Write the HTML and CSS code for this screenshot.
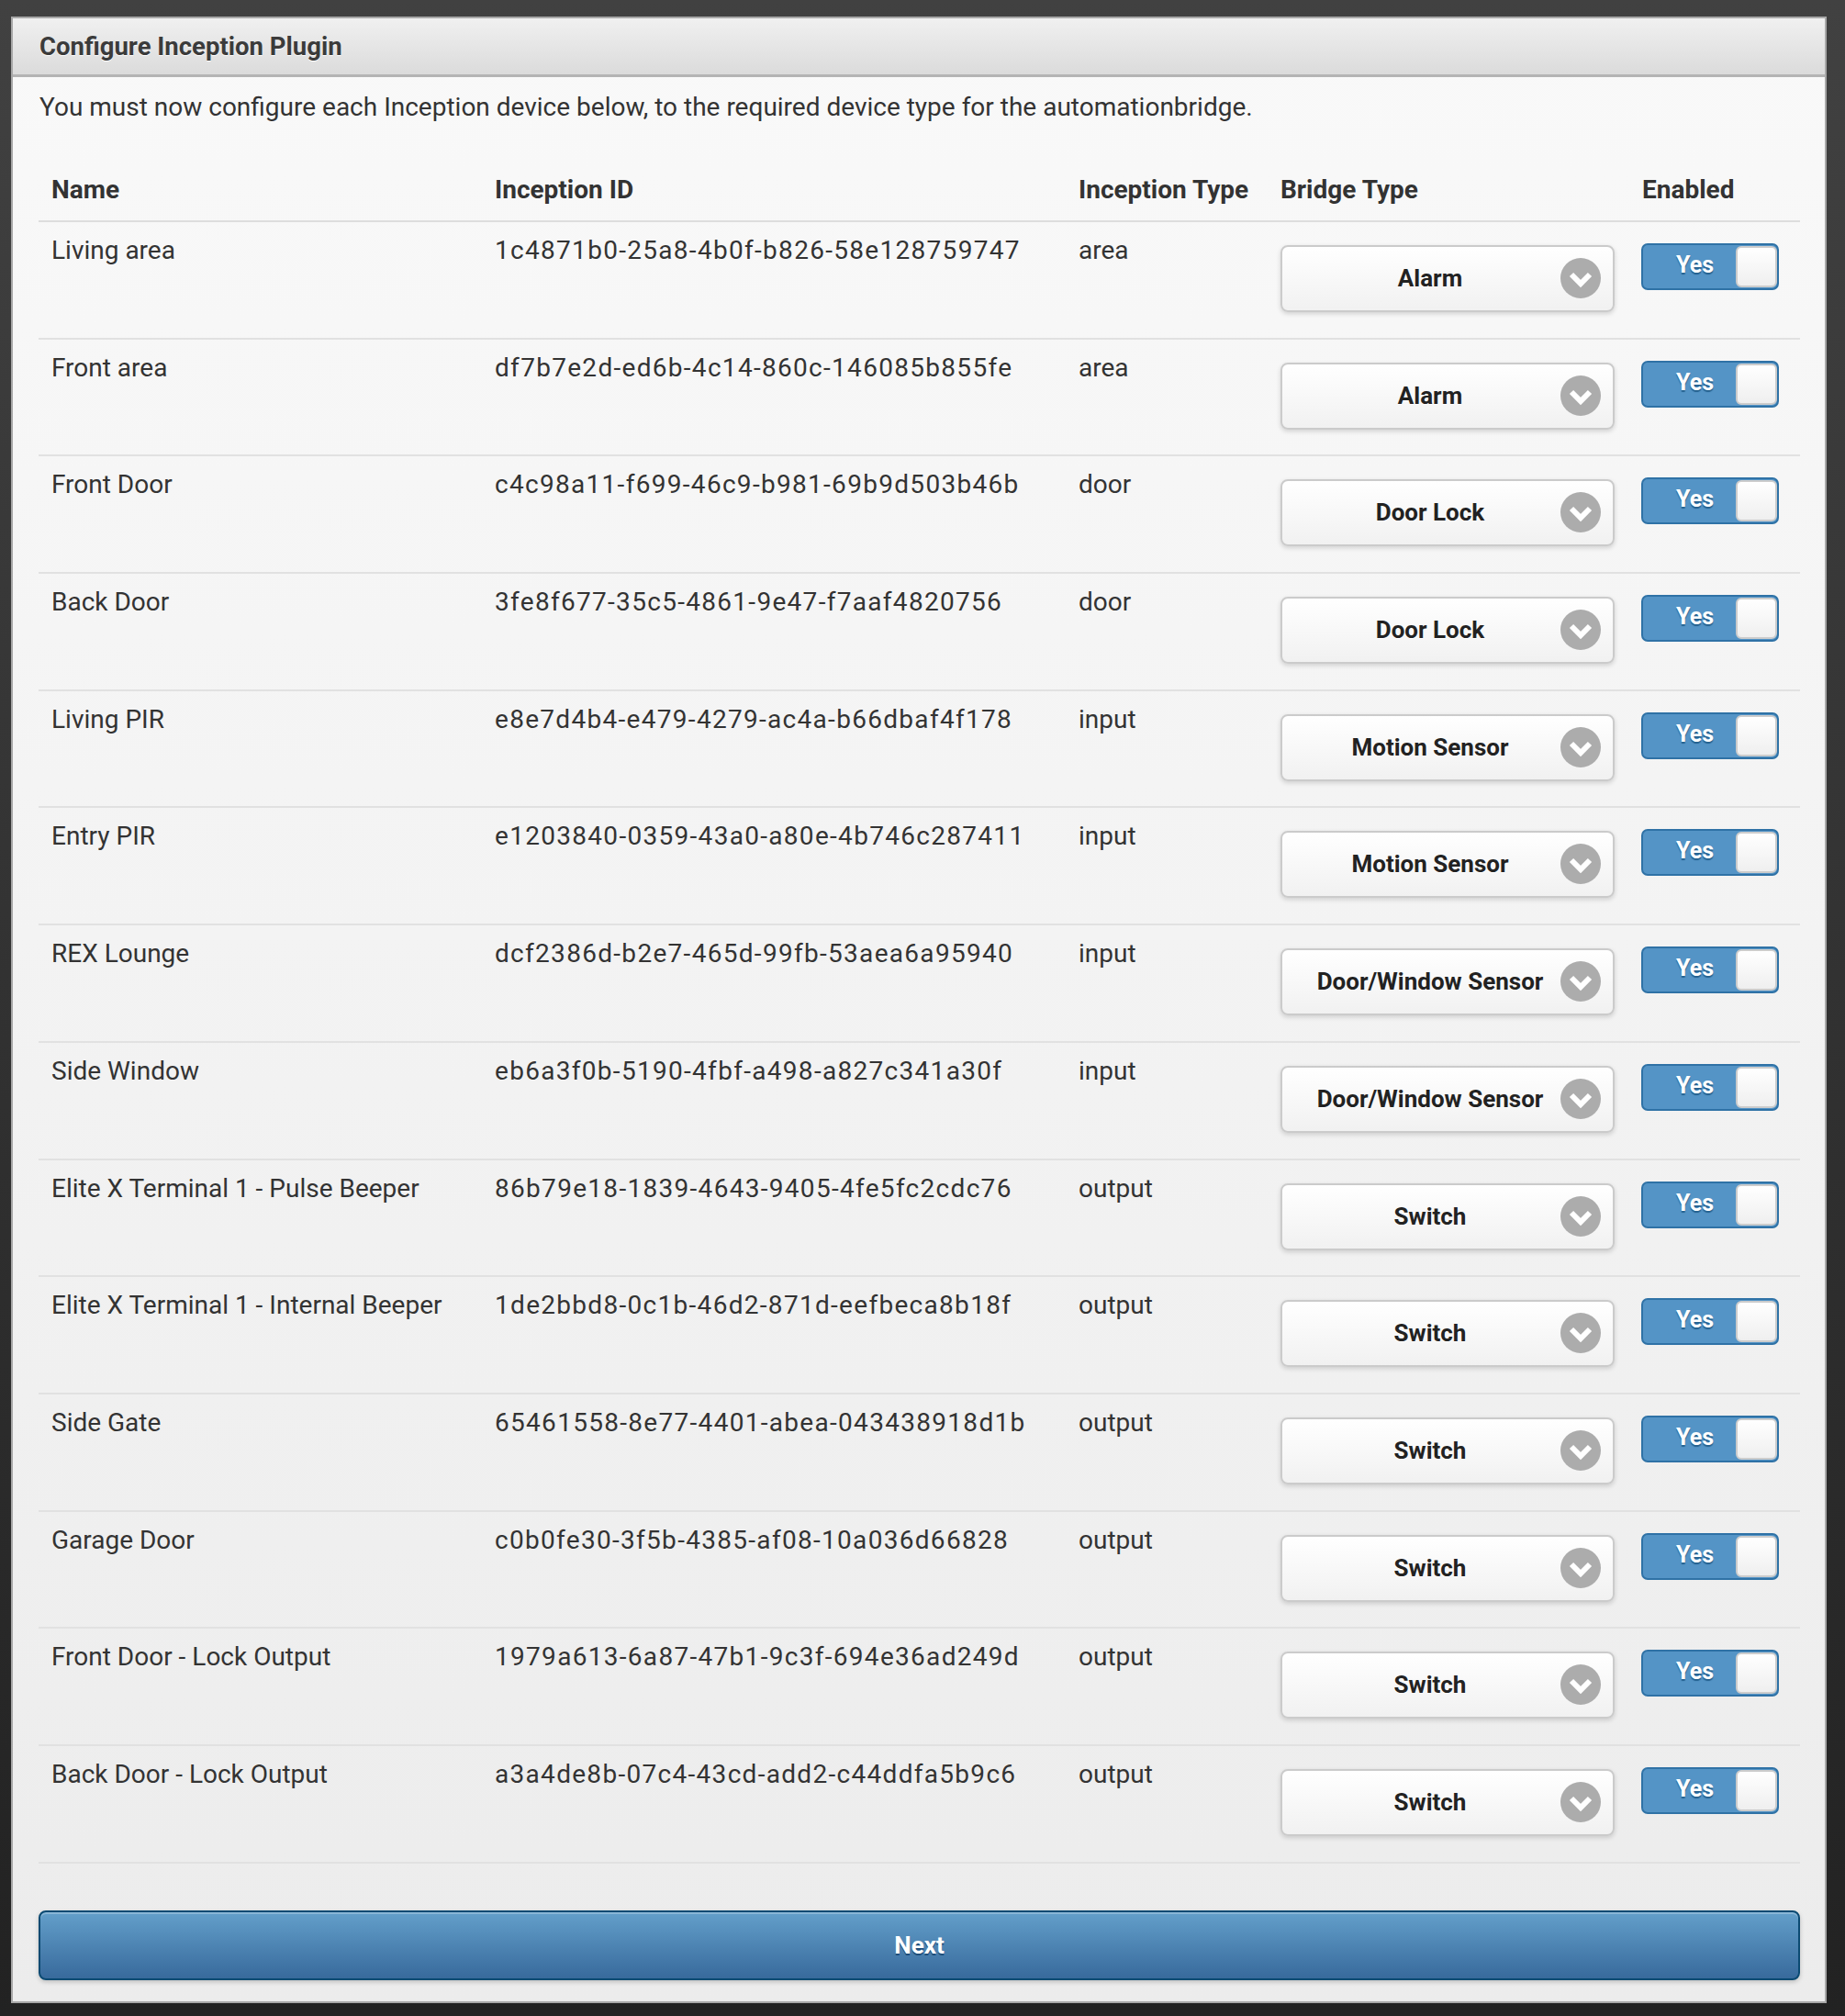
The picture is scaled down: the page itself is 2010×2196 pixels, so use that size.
FILE: index.html
```html
<!DOCTYPE html>
<html lang="en">
<head>
<meta charset="utf-8">
<title>Configure Inception Plugin</title>
<link rel="stylesheet" href="styles.css">
</head>
<body>
<div class="page">
  <div class="panel">
    <div class="panel-header">Configure Inception Plugin</div>
    <div class="panel-content">
      <p class="intro">You must now configure each Inception device below, to the required device type for the automationbridge.</p>
      <div class="devices">
        <div class="thead">
          <div class="th">Name</div>
          <div class="th">Inception ID</div>
          <div class="th">Inception Type</div>
          <div class="th">Bridge Type</div>
          <div class="th">Enabled</div>
        </div>

        <div class="row">
          <div class="cell">Living area</div>
          <div class="cell uuid">1c4871b0-25a8-4b0f-b826-58e128759747</div>
          <div class="cell">area</div>
          <div class="cell sel-cell"><div class="select"><span class="select-text">Alarm</span><svg class="arrow" viewBox="0 0 44 44" width="44" height="44"><circle cx="22" cy="22" r="22"/><path d="M12 18 L22 28 L32 18"/></svg></div></div>
          <div class="cell tog-cell"><div class="toggle"><span class="tog-label">Yes</span><span class="knob"></span></div></div>
        </div>

        <div class="row">
          <div class="cell">Front area</div>
          <div class="cell uuid">df7b7e2d-ed6b-4c14-860c-146085b855fe</div>
          <div class="cell">area</div>
          <div class="cell sel-cell"><div class="select"><span class="select-text">Alarm</span><svg class="arrow" viewBox="0 0 44 44" width="44" height="44"><circle cx="22" cy="22" r="22"/><path d="M12 18 L22 28 L32 18"/></svg></div></div>
          <div class="cell tog-cell"><div class="toggle"><span class="tog-label">Yes</span><span class="knob"></span></div></div>
        </div>

        <div class="row">
          <div class="cell">Front Door</div>
          <div class="cell uuid">c4c98a11-f699-46c9-b981-69b9d503b46b</div>
          <div class="cell">door</div>
          <div class="cell sel-cell"><div class="select"><span class="select-text">Door Lock</span><svg class="arrow" viewBox="0 0 44 44" width="44" height="44"><circle cx="22" cy="22" r="22"/><path d="M12 18 L22 28 L32 18"/></svg></div></div>
          <div class="cell tog-cell"><div class="toggle"><span class="tog-label">Yes</span><span class="knob"></span></div></div>
        </div>

        <div class="row">
          <div class="cell">Back Door</div>
          <div class="cell uuid">3fe8f677-35c5-4861-9e47-f7aaf4820756</div>
          <div class="cell">door</div>
          <div class="cell sel-cell"><div class="select"><span class="select-text">Door Lock</span><svg class="arrow" viewBox="0 0 44 44" width="44" height="44"><circle cx="22" cy="22" r="22"/><path d="M12 18 L22 28 L32 18"/></svg></div></div>
          <div class="cell tog-cell"><div class="toggle"><span class="tog-label">Yes</span><span class="knob"></span></div></div>
        </div>

        <div class="row">
          <div class="cell">Living PIR</div>
          <div class="cell uuid">e8e7d4b4-e479-4279-ac4a-b66dbaf4f178</div>
          <div class="cell">input</div>
          <div class="cell sel-cell"><div class="select"><span class="select-text">Motion Sensor</span><svg class="arrow" viewBox="0 0 44 44" width="44" height="44"><circle cx="22" cy="22" r="22"/><path d="M12 18 L22 28 L32 18"/></svg></div></div>
          <div class="cell tog-cell"><div class="toggle"><span class="tog-label">Yes</span><span class="knob"></span></div></div>
        </div>

        <div class="row">
          <div class="cell">Entry PIR</div>
          <div class="cell uuid">e1203840-0359-43a0-a80e-4b746c287411</div>
          <div class="cell">input</div>
          <div class="cell sel-cell"><div class="select"><span class="select-text">Motion Sensor</span><svg class="arrow" viewBox="0 0 44 44" width="44" height="44"><circle cx="22" cy="22" r="22"/><path d="M12 18 L22 28 L32 18"/></svg></div></div>
          <div class="cell tog-cell"><div class="toggle"><span class="tog-label">Yes</span><span class="knob"></span></div></div>
        </div>

        <div class="row">
          <div class="cell">REX Lounge</div>
          <div class="cell uuid">dcf2386d-b2e7-465d-99fb-53aea6a95940</div>
          <div class="cell">input</div>
          <div class="cell sel-cell"><div class="select"><span class="select-text">Door/Window Sensor</span><svg class="arrow" viewBox="0 0 44 44" width="44" height="44"><circle cx="22" cy="22" r="22"/><path d="M12 18 L22 28 L32 18"/></svg></div></div>
          <div class="cell tog-cell"><div class="toggle"><span class="tog-label">Yes</span><span class="knob"></span></div></div>
        </div>

        <div class="row">
          <div class="cell">Side Window</div>
          <div class="cell uuid">eb6a3f0b-5190-4fbf-a498-a827c341a30f</div>
          <div class="cell">input</div>
          <div class="cell sel-cell"><div class="select"><span class="select-text">Door/Window Sensor</span><svg class="arrow" viewBox="0 0 44 44" width="44" height="44"><circle cx="22" cy="22" r="22"/><path d="M12 18 L22 28 L32 18"/></svg></div></div>
          <div class="cell tog-cell"><div class="toggle"><span class="tog-label">Yes</span><span class="knob"></span></div></div>
        </div>

        <div class="row">
          <div class="cell">Elite X Terminal 1 - Pulse Beeper</div>
          <div class="cell uuid">86b79e18-1839-4643-9405-4fe5fc2cdc76</div>
          <div class="cell">output</div>
          <div class="cell sel-cell"><div class="select"><span class="select-text">Switch</span><svg class="arrow" viewBox="0 0 44 44" width="44" height="44"><circle cx="22" cy="22" r="22"/><path d="M12 18 L22 28 L32 18"/></svg></div></div>
          <div class="cell tog-cell"><div class="toggle"><span class="tog-label">Yes</span><span class="knob"></span></div></div>
        </div>

        <div class="row">
          <div class="cell">Elite X Terminal 1 - Internal Beeper</div>
          <div class="cell uuid">1de2bbd8-0c1b-46d2-871d-eefbeca8b18f</div>
          <div class="cell">output</div>
          <div class="cell sel-cell"><div class="select"><span class="select-text">Switch</span><svg class="arrow" viewBox="0 0 44 44" width="44" height="44"><circle cx="22" cy="22" r="22"/><path d="M12 18 L22 28 L32 18"/></svg></div></div>
          <div class="cell tog-cell"><div class="toggle"><span class="tog-label">Yes</span><span class="knob"></span></div></div>
        </div>

        <div class="row">
          <div class="cell">Side Gate</div>
          <div class="cell uuid">65461558-8e77-4401-abea-043438918d1b</div>
          <div class="cell">output</div>
          <div class="cell sel-cell"><div class="select"><span class="select-text">Switch</span><svg class="arrow" viewBox="0 0 44 44" width="44" height="44"><circle cx="22" cy="22" r="22"/><path d="M12 18 L22 28 L32 18"/></svg></div></div>
          <div class="cell tog-cell"><div class="toggle"><span class="tog-label">Yes</span><span class="knob"></span></div></div>
        </div>

        <div class="row">
          <div class="cell">Garage Door</div>
          <div class="cell uuid">c0b0fe30-3f5b-4385-af08-10a036d66828</div>
          <div class="cell">output</div>
          <div class="cell sel-cell"><div class="select"><span class="select-text">Switch</span><svg class="arrow" viewBox="0 0 44 44" width="44" height="44"><circle cx="22" cy="22" r="22"/><path d="M12 18 L22 28 L32 18"/></svg></div></div>
          <div class="cell tog-cell"><div class="toggle"><span class="tog-label">Yes</span><span class="knob"></span></div></div>
        </div>

        <div class="row">
          <div class="cell">Front Door - Lock Output</div>
          <div class="cell uuid">1979a613-6a87-47b1-9c3f-694e36ad249d</div>
          <div class="cell">output</div>
          <div class="cell sel-cell"><div class="select"><span class="select-text">Switch</span><svg class="arrow" viewBox="0 0 44 44" width="44" height="44"><circle cx="22" cy="22" r="22"/><path d="M12 18 L22 28 L32 18"/></svg></div></div>
          <div class="cell tog-cell"><div class="toggle"><span class="tog-label">Yes</span><span class="knob"></span></div></div>
        </div>

        <div class="row">
          <div class="cell">Back Door - Lock Output</div>
          <div class="cell uuid">a3a4de8b-07c4-43cd-add2-c44ddfa5b9c6</div>
          <div class="cell">output</div>
          <div class="cell sel-cell"><div class="select"><span class="select-text">Switch</span><svg class="arrow" viewBox="0 0 44 44" width="44" height="44"><circle cx="22" cy="22" r="22"/><path d="M12 18 L22 28 L32 18"/></svg></div></div>
          <div class="cell tog-cell"><div class="toggle"><span class="tog-label">Yes</span><span class="knob"></span></div></div>
        </div>
      </div>
      <div class="next-btn">Next</div>
    </div>
  </div>
</div>
</body>
</html>
```

FILE: styles.css
```css
html, body {
  margin: 0;
  padding: 0;
}
body {
  min-height: 2196px;
  background: linear-gradient(#414141, #222222);
  font-family: Roboto, "Liberation Sans", sans-serif;
  color: #333333;
}
.page {
  padding: 18px 20px 13px 12px;
}
.panel {
  border: 2px solid #a8a8a8;
  background: linear-gradient(#f9f9f9, #ececec);
}
.panel-header {
  height: 59px;
  padding: 2px 0 0 29px;
  background: linear-gradient(#f0f0f0, #dbdbdb);
  border-bottom: 3px solid #b4b4b4;
  font-size: 27.5px;
  font-weight: 700;
  line-height: 57px;
  color: #3b3b3b;
  text-shadow: 0 1px 0 #ffffff;
}
.panel-content {
  padding: 13px 27px 23px 28px;
}
.intro {
  margin: 0;
  padding-left: 1px;
  font-size: 28px;
  line-height: 39px;
  color: #333333;
}
.devices {
  margin-top: 39px;
}
.thead, .row {
  display: grid;
  grid-template-columns: 483px 636px 220px 394px 186px;
}
.thead {
  border-bottom: 2px solid #dddddd;
}
.th {
  padding: 14px 14px 15px;
  font-size: 28px;
  font-weight: 700;
  line-height: 36px;
  color: #333333;
  text-shadow: 0 1px 0 #ffffff;
}
.row {
  height: 127.7px;
  box-sizing: border-box;
  border-bottom: 2px solid #e1e1e1;
}
.cell {
  padding: 13px 14px 0;
  font-size: 28px;
  line-height: 36px;
  color: #333333;
  white-space: nowrap;
}
.uuid {
  letter-spacing: 1.3px;
}
.sel-cell {
  padding: 25px 16px 0 14px;
}
.select {
  position: relative;
  height: 73px;
  box-sizing: border-box;
  border: 2px solid #cbcbcb;
  border-radius: 8px;
  background: linear-gradient(#ffffff, #f1f1f1);
  box-shadow: 0 2px 5px rgba(0, 0, 0, 0.15);
  padding: 0 68px 0 30px;
  text-align: center;
  font-size: 26px;
  font-weight: 700;
  line-height: 69px;
  color: #222222;
  text-shadow: 0 1px 0 #ffffff;
}
.arrow {
  position: absolute;
  right: 13px;
  top: 12px;
}
.arrow circle {
  fill: #acacac;
}
.arrow path {
  fill: none;
  stroke: #ffffff;
  stroke-width: 6;
}
.tog-cell {
  padding: 23px 0 0 13px;
}
.toggle {
  display: flex;
  width: 150px;
  height: 51px;
  box-sizing: border-box;
  border: 2px solid #2f72a6;
  border-radius: 7px;
  background: #5494c6;
}
.tog-label {
  flex: 1;
  padding-left: 12px;
  text-align: center;
  font-size: 25px;
  font-weight: 700;
  line-height: 43px;
  color: #ffffff;
  text-shadow: 0 2px 1px #24618f;
}
.knob {
  width: 45px;
  height: 45px;
  margin: 1px 0 0;
  box-sizing: border-box;
  border: 2px solid #cccccc;
  border-radius: 6px;
  background: linear-gradient(#ffffff, #efefef);
}
.next-btn {
  margin-top: 51px;
  height: 76px;
  box-sizing: border-box;
  border: 2px solid #0b4a72;
  border-radius: 8px;
  background: linear-gradient(#639fca, #386a9c);
  box-shadow: inset 0 2px 0 rgba(255, 255, 255, 0.25), 0 2px 5px rgba(0, 0, 0, 0.2);
  text-align: center;
  font-size: 26px;
  font-weight: 700;
  line-height: 72px;
  color: #ffffff;
  text-shadow: 0 2px 0 #1f4e7a;
}
```
